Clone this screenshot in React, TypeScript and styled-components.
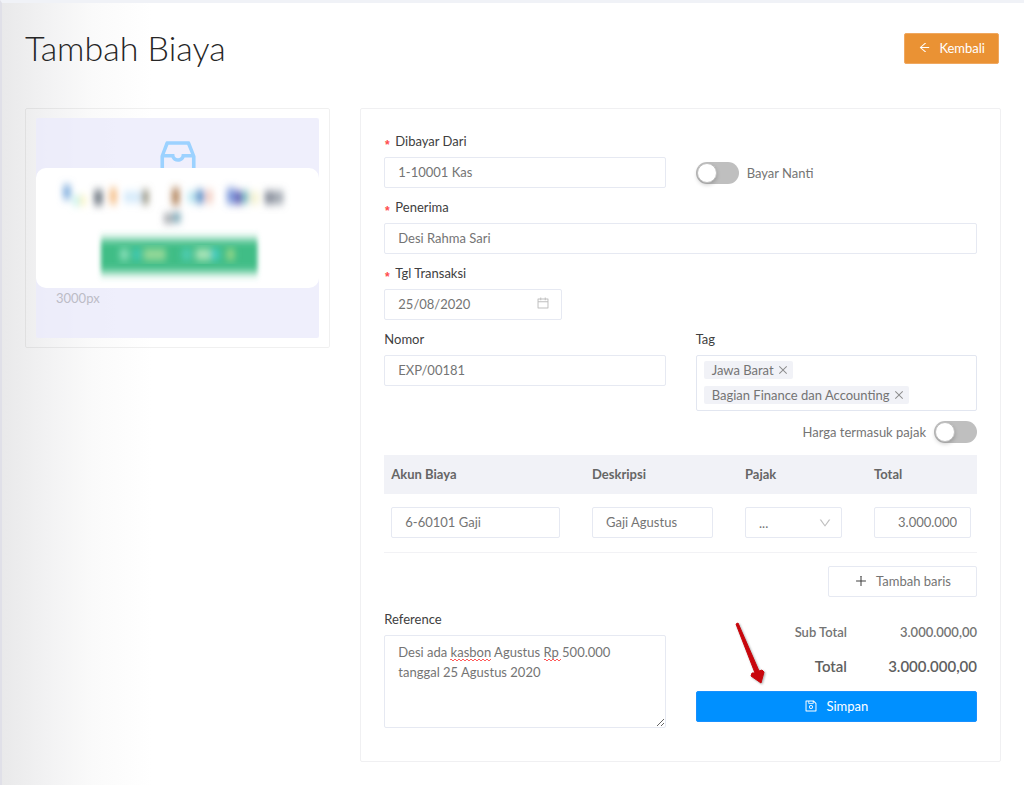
import React from 'react';
import styled, { createGlobalStyle } from 'styled-components';
import {
  AiOutlineArrowLeft,
  AiOutlineCalendar,
  AiOutlineClose,
  AiOutlineDown,
  AiOutlineInbox,
  AiOutlinePlus,
  AiOutlineSave,
} from 'react-icons/ai';

const GlobalStyle = createGlobalStyle`
  *, *::before, *::after { box-sizing: border-box; }
  body {
    margin: 0;
    background: #fff;
    color: #747474;
    font: 400 13px/20px Lato, "Liberation Sans", sans-serif;
  }
  button, input, select, textarea { font: inherit; color: inherit; }
`;

const Page = styled.main`
  min-height: 100vh;
  padding: 25px 23px 22px;
  border-top: 3px solid #f0f2f7;
  border-left: 2px solid #e0e0e8;
  background: linear-gradient(to right, #e9e9ea 0, #f3f3f4 50px, #fafafa 90px, #fff 150px);
`;

const Header = styled.header`
  display: flex;
  align-items: center;
  justify-content: space-between;
  height: 40px;
  margin-bottom: 40px;
  padding-right: 2px;
`;

const Title = styled.h1`
  margin: 0;
  font-size: 34px;
  line-height: 40px;
  font-weight: 300;
  color: #262626;
`;

const Button = styled.button<{ $kind: 'back' | 'plain' | 'primary' }>`
  display: flex;
  align-items: center;
  justify-content: center;
  gap: 8px;
  height: 31px;
  padding: 0 ${p => (p.$kind === 'back' ? 13 : 25)}px 1px;
  border: 1px solid ${p => ({ back: '#f0a860', plain: '#e6e9f2', primary: '#1890ff' })[p.$kind]};
  border-radius: 2px;
  background: ${p => ({ back: '#ea9234', plain: '#fff', primary: '#0090ff' })[p.$kind]};
  color: ${p => (p.$kind === 'plain' ? '#747474' : '#fff')};
  cursor: pointer;
  svg {
    flex: none;
    color: ${p => (p.$kind === 'plain' ? '#404040' : '#fff')};
  }
`;

const Columns = styled.div`
  display: grid;
  grid-template-columns: repeat(3, minmax(0, 1fr));
  gap: 30px;
  align-items: start;
`;

const UploadCard = styled.section`
  padding: 9px 10px;
  border: 1px solid rgba(0, 0, 0, 0.06);
  border-radius: 2px;
`;

const DropZone = styled.div`
  position: relative;
  display: flex;
  flex-direction: column;
  height: 220px;
  padding: 17px 20px 30px;
  border-radius: 2px;
  background: rgba(235, 235, 251, 0.8);
`;

const InboxIcon = styled(AiOutlineInbox)`
  align-self: center;
  color: #9cd2ff;
`;

const UploadHint = styled.p`
  margin: auto 0 0;
  color: #bcbcc6;
`;

const Notice = styled.svg`
  position: absolute;
  top: 50px;
  left: 0;
  width: 100%;
  height: 120px;
  border-radius: 10px;
  background: #fff;
`;

const FormCard = styled.form`
  grid-column: span 2;
  padding: 22px 23px 24px;
  border: 1px solid #f0f0f2;
  border-radius: 2px;
  background: #fff;
`;

const Row = styled.div`
  display: grid;
  grid-template-columns: repeat(2, minmax(0, 1fr));
  column-gap: 30px;
  margin-bottom: 9px;
`;

const Field = styled.div<{ $wide?: boolean }>`
  display: flex;
  flex-direction: column;
  gap: 6px;
  min-width: 0;
  grid-column: span ${p => (p.$wide ? 2 : 1)};
`;

const Label = styled.label`
  display: flex;
  align-items: center;
  gap: 5px;
  color: #404040;
`;

const Required = styled.span`
  display: flex;
  justify-content: center;
  width: 6px;
  height: 10px;
  font: 700 12px/20px "Liberation Mono", monospace;
  color: #ff4d4f;
`;

const TextInput = styled.input<{ $right?: boolean }>`
  display: block;
  width: 100%;
  height: 31px;
  padding: 0 13px 1px;
  border: 1px solid #e6e9f2;
  border-radius: 2px;
  background: #fff;
  outline: none;
  text-align: ${p => (p.$right ? 'right' : 'left')};
`;

const Adorned = styled.div<{ $narrow?: boolean }>`
  position: relative;
  width: ${p => (p.$narrow ? '178px' : '100%')};
  > svg {
    position: absolute;
    top: ${p => (p.$narrow ? 7 : 9)}px;
    right: ${p => (p.$narrow ? 12 : 10)}px;
    color: #bfbfbf;
    pointer-events: none;
  }
`;

const Select = styled.select`
  display: block;
  width: 100%;
  height: 31px;
  padding: 0 13px;
  appearance: none;
  border: 1px solid #e6e9f2;
  border-radius: 2px;
  background: #fff;
`;

const SwitchLabel = styled.label<{ $end?: boolean }>`
  display: flex;
  align-items: center;
  justify-content: ${p => (p.$end ? 'flex-end' : 'flex-start')};
  align-self: end;
  gap: 8px;
  height: ${p => (p.$end ? 24 : 31)}px;
`;

const Switch = styled.input`
  appearance: none;
  flex: none;
  width: 43px;
  height: 22px;
  margin: 0;
  padding: 1px;
  border-radius: 11px;
  background: #bfbfbf;
  cursor: pointer;
  &::before {
    content: '';
    display: block;
    width: 20px;
    height: 20px;
    border: 1px solid #bfbfbf;
    border-radius: 50%;
    background: #fff;
    box-shadow: 0 2px 4px rgba(0, 0, 0, 0.2);
  }
  &:checked { background: #0090ff; }
  &:checked::before { margin-left: auto; }
`;

const TagBox = styled.div`
  display: flex;
  flex-wrap: wrap;
  gap: 7px;
  align-items: flex-start;
  min-height: 56px;
  padding: 5px 60px 6px 7px;
  border: 1px solid #e2e6f0;
  border-radius: 2px;
`;

const Tag = styled.span`
  display: inline-flex;
  align-items: center;
  gap: 3px;
  height: 18px;
  padding: 0 4px 0 8px;
  border-radius: 2px;
  background: #f1f2f7;
  white-space: nowrap;
`;

const TagRemove = styled.button`
  display: flex;
  padding: 0;
  border: 0;
  background: none;
  color: #8c8c8c;
  cursor: pointer;
`;

const Table = styled.table`
  width: 100%;
  margin-top: 11px;
  table-layout: fixed;
  border-collapse: collapse;
  th {
    height: 39px;
    padding: 0 16px 2px;
    background: #f1f2f7;
    text-align: left;
    font-weight: 700;
    color: #666;
  }
  td {
    padding: 13px 16px 14px;
    border-bottom: 1px solid #f2f2f5;
  }
  th:first-child, td:first-child { padding-left: 7px; }
  th:last-child, td:last-child { padding-right: 6px; }
`;

const Col = styled.col<{ $width?: number }>`
  width: ${p => (p.$width ? `${p.$width}px` : 'auto')};
`;

const Actions = styled.div`
  display: flex;
  justify-content: flex-end;
  margin: 13px 0 12px;
`;

const NoteBox = styled.div`
  position: relative;
`;

const Note = styled.textarea`
  display: block;
  width: 100%;
  height: 93px;
  padding: 6px 13px;
  border: 1px solid #e6e9f2;
  border-radius: 2px;
  background: #fff;
  outline: none;
  resize: vertical;
`;

const Squiggle = styled.i<{ $left: number; $width: number }>`
  position: absolute;
  top: 24px;
  left: ${p => p.$left}px;
  width: ${p => p.$width}px;
  height: 2px;
  background:
    repeating-linear-gradient(to right, #ff5a5a 0 2px, transparent 2px 4px) 0 0 / 100% 1px no-repeat,
    repeating-linear-gradient(to right, transparent 0 2px, #ff5a5a 2px 4px) 0 1px / 100% 1px no-repeat;
  pointer-events: none;
`;

const Summary = styled.div`
  position: relative;
  padding-top: 13px;
`;

const Totals = styled.dl`
  display: grid;
  grid-template-columns: 1fr 130px;
  row-gap: 14px;
  margin: 0 0 14px;
  text-align: right;
  font-weight: 600;
  dd { margin: 0; }
`;

const Amount = styled.span<{ $large?: boolean }>`
  font-size: ${p => (p.$large ? 15 : 13)}px;
  color: ${p => (p.$large ? '#606060' : '#747474')};
`;

const Save = styled(Button)`
  width: 100%;
`;

const Pointer = styled.svg`
  position: absolute;
  top: 13px;
  left: 36px;
  overflow: visible;
  pointer-events: none;
  filter: drop-shadow(1px 1px 1px rgba(0, 0, 0, 0.35));
`;

const smudges: [number, number, number, number, string, number][] = [
  [27, 17, 8, 14, '#78a8dc', 0.9],
  [37, 28, 7, 9, '#b4eee4', 0.8],
  [44, 28, 6, 9, '#f6efaa', 0.8],
  [58, 22, 9, 15, '#66707a', 0.9],
  [74, 20, 7, 16, '#f3b77c', 0.9],
  [88, 24, 17, 10, '#cce6fa', 0.9],
  [106, 22, 7, 14, '#8f8c78', 0.9],
  [136, 20, 8, 17, '#ae7e55', 0.9],
  [128, 46, 9, 9, '#878c92', 0.8],
  [137, 45, 8, 9, '#5e94a6', 0.9],
  [152, 24, 8, 10, '#aee2f0', 0.9],
  [160, 22, 9, 13, '#5389c4', 0.9],
  [171, 22, 6, 13, '#efbbaa', 0.8],
  [191, 20, 9, 16, '#7795da', 0.9],
  [199, 23, 8, 13, '#514aae', 0.9],
  [207, 23, 7, 12, '#5faeb0', 0.8],
  [216, 24, 7, 12, '#f2f0c4', 0.9],
  [229, 23, 10, 13, '#79818e', 0.9],
  [239, 23, 9, 13, '#8b929f', 0.8],
];

const glints: [number, number, string][] = [
  [84, 9, '#8be0bb'],
  [97, 8, '#3fcbb8'],
  [108, 22, '#9fdc9a'],
  [146, 10, '#50cdb4'],
  [160, 15, '#b4e8bd'],
  [175, 9, '#48cfc8'],
  [191, 8, '#9cd987'],
];

export default function App() {
  return (
    <>
      <GlobalStyle />
      <Page>
        <Header>
          <Title>Tambah Biaya</Title>
          <Button $kind="back" type="button">
            <AiOutlineArrowLeft size={13} />
            Kembali
          </Button>
        </Header>
        <Columns>
          <UploadCard>
            <DropZone>
              <InboxIcon size={48} />
              <UploadHint>3000px</UploadHint>
              <Notice viewBox="0 0 284 120" preserveAspectRatio="xMidYMid meet" aria-hidden="true">
                <defs>
                  <filter id="soft" x="-30%" y="-30%" width="160%" height="160%">
                    <feGaussianBlur stdDeviation="3 4" />
                  </filter>
                  <filter id="softBar" x="-10%" y="-40%" width="120%" height="180%">
                    <feGaussianBlur stdDeviation="2 5" />
                  </filter>
                </defs>
                <g filter="url(#soft)">
                  {smudges.map(([x, y, w, h, fill, opacity]) => (
                    <rect key={x} x={x} y={y} width={w} height={h} fill={fill} opacity={opacity} />
                  ))}
                </g>
                <rect x="65" y="71" width="157" height="34" fill="#41bd86" filter="url(#softBar)" />
                <g filter="url(#soft)">
                  {glints.map(([x, w, fill]) => (
                    <rect key={x} x={x} y="81" width={w} height="11" fill={fill} />
                  ))}
                </g>
              </Notice>
            </DropZone>
          </UploadCard>

          <FormCard onSubmit={e => e.preventDefault()}>
            <Row>
              <Field>
                <Label htmlFor="account"><Required>*</Required>Dibayar Dari</Label>
                <TextInput id="account" defaultValue="1-10001 Kas" />
              </Field>
              <SwitchLabel>
                <Switch type="checkbox" role="switch" />
                Bayar Nanti
              </SwitchLabel>
            </Row>
            <Row>
              <Field $wide>
                <Label htmlFor="recipient"><Required>*</Required>Penerima</Label>
                <TextInput id="recipient" defaultValue="Desi Rahma Sari" />
              </Field>
            </Row>
            <Row>
              <Field>
                <Label htmlFor="date"><Required>*</Required>Tgl Transaksi</Label>
                <Adorned $narrow>
                  <TextInput id="date" defaultValue="25/08/2020" />
                  <AiOutlineCalendar size={14} />
                </Adorned>
              </Field>
            </Row>
            <Row>
              <Field>
                <Label htmlFor="number">Nomor</Label>
                <TextInput id="number" defaultValue="EXP/00181" />
              </Field>
              <Field role="group" aria-labelledby="tag-label">
                <Label as="span" id="tag-label">Tag</Label>
                <TagBox>
                  {['Jawa Barat', 'Bagian Finance dan Accounting'].map(name => (
                    <Tag key={name}>
                      {name}
                      <TagRemove type="button" aria-label={`Hapus ${name}`}>
                        <AiOutlineClose size={12} />
                      </TagRemove>
                    </Tag>
                  ))}
                </TagBox>
              </Field>
            </Row>
            <SwitchLabel $end>
              Harga termasuk pajak
              <Switch type="checkbox" role="switch" />
            </SwitchLabel>
            <Table>
              <colgroup>
                <Col />
                <Col $width={153} />
                <Col $width={129} />
                <Col $width={119} />
              </colgroup>
              <thead>
                <tr>
                  <th scope="col">Akun Biaya</th>
                  <th scope="col">Deskripsi</th>
                  <th scope="col">Pajak</th>
                  <th scope="col">Total</th>
                </tr>
              </thead>
              <tbody>
                <tr>
                  <td><TextInput aria-label="Akun Biaya" defaultValue="6-60101 Gaji" /></td>
                  <td><TextInput aria-label="Deskripsi" defaultValue="Gaji Agustus" /></td>
                  <td>
                    <Adorned>
                      <Select aria-label="Pajak"><option>...</option></Select>
                      <AiOutlineDown size={14} />
                    </Adorned>
                  </td>
                  <td><TextInput aria-label="Total" $right defaultValue="3.000.000" /></td>
                </tr>
              </tbody>
            </Table>
            <Actions>
              <Button $kind="plain" type="button">
                <AiOutlinePlus size={14} />
                Tambah baris
              </Button>
            </Actions>
            <Row>
              <Field>
                <Label htmlFor="note">Reference</Label>
                <NoteBox>
                  <Note
                    id="note"
                    spellCheck={false}
                    defaultValue={'Desi ada kasbon Agustus Rp 500.000\ntanggal 25 Agustus 2020'}
                  />
                  <Squiggle $left={66} $width={41} />
                  <Squiggle $left={160} $width={17} />
                </NoteBox>
              </Field>
              <Summary>
                <Totals>
                  <dt><Amount>Sub Total</Amount></dt>
                  <dd><Amount>3.000.000,00</Amount></dd>
                  <dt><Amount $large>Total</Amount></dt>
                  <dd><Amount $large>3.000.000,00</Amount></dd>
                </Totals>
                <Save $kind="primary" type="submit">
                  <AiOutlineSave size={14} />
                  Simpan
                </Save>
                <Pointer width="32" height="64" viewBox="0 0 32 64" aria-hidden="true">
                  <path
                    d="M4 2 L6 1 L27 49 L30 48 L32 50 L29 61 L19 54 L20 51 L23 51 Z"
                    fill="#c8060c"
                    stroke="#c8060c"
                    strokeLinejoin="round"
                  />
                </Pointer>
              </Summary>
            </Row>
          </FormCard>
        </Columns>
      </Page>
    </>
  );
}
